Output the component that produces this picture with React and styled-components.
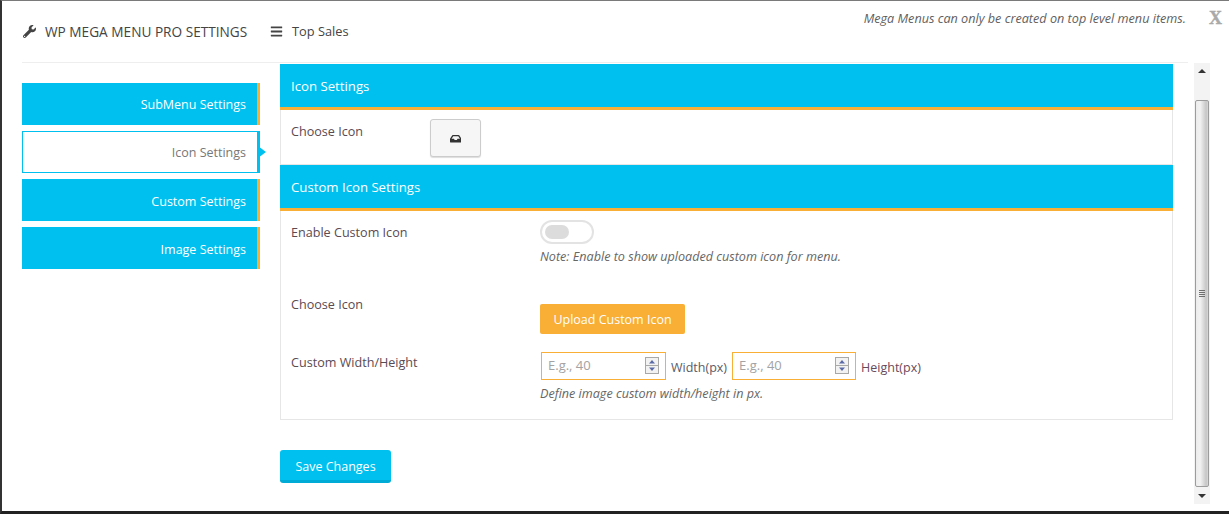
import React from "react";
import styled, { createGlobalStyle } from "styled-components";
import { FaWrench, FaBars, FaInbox } from "react-icons/fa";

const cyan = "#00c0ef";
const orange = "#f9ae36";

const GlobalStyle = createGlobalStyle`
  html, body { margin: 0; padding: 0; background: #fff; }
  * { box-sizing: border-box; }
  body { font-family: "Open Sans", "Liberation Sans", sans-serif; font-size: 12px; color: #5b5b5b; }
`;

const Frame = styled.div`
  width: 1229px;
  height: 514px;
  overflow: hidden;
  border-top: 1px solid #7a7a7a;
  border-left: 2px solid #333;
  border-bottom: 3px solid #222;
  background: #fff;
`;

const Header = styled.header`
  height: 62px;
  margin-left: 20px;
  margin-right: 41px;
  border-bottom: 1px solid #eee;
  display: flex;
  align-items: flex-start;
`;

const Brand = styled.div`
  display: flex;
  align-items: center;
  margin-top: 22px;
  font-size: 13.65px;
  line-height: 18px;
  color: #444;
  width: 248px;
  svg { font-size: 13px; margin: 0 9px 2px 1px; color: #444; }
`;

const MenuName = styled.div`
  display: flex;
  align-items: center;
  margin-top: 21px;
  font-size: 12.8px;
  line-height: 18px;
  color: #444;
  svg { font-size: 13px; margin-right: 9px; }
`;

const Note = styled.div`
  margin-left: auto;
  margin-right: 2px;
  margin-top: 9px;
  font-size: 12.65px;
  line-height: 17px;
  font-style: italic;
  color: #5f5f5f;
`;

const Close = styled.div`
  position: absolute;
  top: 9px;
  left: 1209px;
  font-family: "Liberation Serif", serif;
  font-size: 18px;
  line-height: 18px;
  font-weight: 700;
  color: #a9a9a9;
  -webkit-text-stroke: 0.4px #a9a9a9;
`;

const Content = styled.div`
  display: flex;
  height: 448px;
  padding-left: 20px;
`;

const Sidebar = styled.nav`
  width: 238px;
  margin-top: 20px;
  display: flex;
  flex-direction: column;
  gap: 6px;
`;

const Tab = styled.div`
  position: relative;
  height: 42px;
  padding-right: 11px;
  padding-top: ${(p) => (p.$low ? 2 : 0)}px;
  display: flex;
  align-items: center;
  justify-content: flex-end;
  font-size: 12.5px;
  background: ${(p) => (p.$active ? "#fff" : cyan)};
  color: ${(p) => (p.$active ? "#777" : "#fff")};
  border: ${(p) => (p.$active ? `1px solid ${cyan}` : "none")};
  border-right: 3px solid ${(p) => (p.$active ? cyan : orange)};
  ${(p) =>
    p.$active &&
    `&::after {
      content: "";
      position: absolute;
      left: 235px;
      top: 14px;
      border-left: 8px solid ${cyan};
      border-top: 6px solid transparent;
      border-bottom: 6px solid transparent;
    }`}
`;

const Main = styled.main`
  width: 893px;
  margin-left: 20px;
  padding-top: 1px;
`;

const SectionTitle = styled.h3`
  margin: 0;
  height: 46px;
  padding: 1px 11px 0;
  display: flex;
  align-items: center;
  font-size: 13.2px;
  font-weight: 400;
  color: #fff;
  background: ${cyan};
  border-bottom: 3px solid ${orange};
`;

const Panel = styled.section`
  height: ${(p) => p.$height}px;
  border: 1px solid #e6e6e6;
  border-top: none;
  padding: 0 10px;
`;

const Row = styled.div`
  display: flex;
  align-items: flex-start;
  padding-top: ${(p) => p.$top}px;
  height: ${(p) => p.$height}px;
`;

const Label = styled.div`
  width: ${(p) => p.$width}px;
  flex: none;
  font-size: 12.6px;
  line-height: 17px;
  color: #5a4a52;
`;

const IconButton = styled.button`
  width: 51px;
  height: 38px;
  margin-top: -4px;
  padding: 2px 0 0;
  display: flex;
  align-items: center;
  justify-content: center;
  background: #f6f6f6;
  border: 1px solid #ccc;
  border-radius: 3px;
  box-shadow: 0 1px 1px #ddd;
  color: #333;
  font-size: 11.5px;
`;

const Toggle = styled.div`
  width: 54px;
  height: 24px;
  margin-top: -4px;
  padding: 3px;
  border: 2px solid #e3e3e3;
  border-radius: 12px;
  background: #fff;
  &::before {
    content: "";
    display: block;
    width: 24px;
    height: 14px;
    border-radius: 7px;
    background: #dcdcdc;
  }
`;

const Help = styled.div`
  font-size: 12.6px;
  line-height: 16px;
  font-style: italic;
  color: #666;
  margin-top: ${(p) => p.$top || 0}px;
`;

const UploadButton = styled.button`
  width: 145px;
  height: 30px;
  margin-top: 8px;
  padding: 0;
  background: ${orange};
  border: none;
  border-radius: 2px;
  color: #fff;
  font-family: inherit;
  font-size: 12.5px;
`;

const Sizes = styled.div`
  display: flex;
  align-items: flex-start;
  margin-top: -2px;
  margin-left: 1px;
`;

const NumberBox = styled.div`
  width: ${(p) => p.$width}px;
  height: 28px;
  padding: 0 6px 2px 6px;
  display: flex;
  align-items: center;
  justify-content: space-between;
  border: 1px solid ${orange};
  font-size: 13px;
  color: #a3a3a3;
`;

const Spinner = styled.svg`
  width: 14px;
  height: 17px;
  flex: none;
`;

const Unit = styled.span`
  margin: 7px 5px 0 5px;
  font-size: 12.5px;
  line-height: 17px;
  color: ${(p) => p.$color};
`;

const SaveButton = styled.button`
  display: block;
  width: 111px;
  height: 33px;
  margin-top: 30px;
  padding: 2px 0 0;
  background: ${cyan};
  border: none;
  border-bottom: 3px solid #00acd6;
  border-radius: 3px;
  color: #fff;
  font-family: inherit;
  font-size: 12.5px;
`;

const Scrollbar = styled.div`
  width: 16px;
  height: 441px;
  margin-left: 21px;
  display: flex;
  flex-direction: column;
  background: #f3f3f3;
`;

const ScrollArrow = styled.div`
  height: 37px;
  flex: ${(p) => (p.$grow ? 1 : "none")};
  display: flex;
  justify-content: center;
  align-items: ${(p) => (p.$down ? "center" : "flex-start")};
  padding-top: ${(p) => (p.$down ? 0 : 6)}px;
  background: #f3f3f3;
`;

const Triangle = styled.div`
  width: 0;
  height: 0;
  border-left: 4px solid transparent;
  border-right: 4px solid transparent;
  ${(p) => (p.$down ? "border-top: 4px solid #333;" : "border-bottom: 4px solid #333;")}
`;

const Thumb = styled.div`
  height: 387px;
  margin: 0 1px;
  border: 1px solid #9c9c9c;
  border-radius: 2px;
  background: linear-gradient(to right, #ececec, #f2f2f2 35%, #c6c6c6 85%, #d8d8d8);
  display: flex;
  align-items: center;
  justify-content: center;
`;

const Grip = styled.div`
  width: 6px;
  height: 7px;
  background: repeating-linear-gradient(to bottom, #6f6f6f 0 1px, transparent 1px 2px);
`;

const SpinnerIcon = () => (
  <Spinner viewBox="0 0 14 17">
    <rect x="0.5" y="0.5" width="13" height="16" fill="#f2f2f2" stroke="#a8a8a8" />
    <line x1="0" y1="8.5" x2="14" y2="8.5" stroke="#a8a8a8" />
    <path d="M7 3 L10 6.5 L4 6.5 Z" fill="#5a6aa8" />
    <path d="M7 14 L10 10.5 L4 10.5 Z" fill="#5a6aa8" />
  </Spinner>
);

const tabs = ["SubMenu Settings", "Icon Settings", "Custom Settings", "Image Settings"];

export default function App() {
  return (
    <Frame>
      <GlobalStyle />
      <Header>
        <Brand>
          <FaWrench />
          WP MEGA MENU PRO SETTINGS
        </Brand>
        <MenuName>
          <FaBars />
          Top Sales
        </MenuName>
        <Note>Mega Menus can only be created on top level menu items.</Note>
      </Header>
      <Close>X</Close>
      <Content>
        <Sidebar>
          {tabs.map((t, i) => (
            <Tab key={t} $active={t === "Icon Settings"} $low={i > 1}>
              {t}
            </Tab>
          ))}
        </Sidebar>
        <Main>
          <SectionTitle>Icon Settings</SectionTitle>
          <Panel $height={55}>
            <Row $top={13} $height={54}>
              <Label $width={139}>Choose Icon</Label>
              <IconButton>
                <FaInbox />
              </IconButton>
            </Row>
          </Panel>
          <SectionTitle>Custom Icon Settings</SectionTitle>
          <Panel $height={209}>
            <Row $top={13} $height={83}>
              <Label $width={249}>Enable Custom Icon</Label>
              <div>
                <Toggle />
                <Help $top={5}>Note: Enable to show uploaded custom icon for menu.</Help>
              </div>
            </Row>
            <Row $top={2} $height={58}>
              <Label $width={249}>Choose Icon</Label>
              <UploadButton>Upload Custom Icon</UploadButton>
            </Row>
            <Row $top={2} $height={60}>
              <Label $width={249}>Custom Width/Height</Label>
              <div>
                <Sizes>
                  <NumberBox $width={125}>
                    E.g., 40
                    <SpinnerIcon />
                  </NumberBox>
                  <Unit $color="#5a5a66">Width(px)</Unit>
                  <NumberBox $width={124}>
                    E.g., 40
                    <SpinnerIcon />
                  </NumberBox>
                  <Unit $color="#6a4a5a">Height(px)</Unit>
                </Sizes>
                <Help $top={6}>Define image custom width/height in px.</Help>
              </div>
            </Row>
          </Panel>
          <SaveButton>Save Changes</SaveButton>
        </Main>
        <Scrollbar>
          <ScrollArrow>
            <Triangle />
          </ScrollArrow>
          <Thumb>
            <Grip />
          </Thumb>
          <ScrollArrow $down $grow>
            <Triangle $down />
          </ScrollArrow>
        </Scrollbar>
      </Content>
    </Frame>
  );
}
